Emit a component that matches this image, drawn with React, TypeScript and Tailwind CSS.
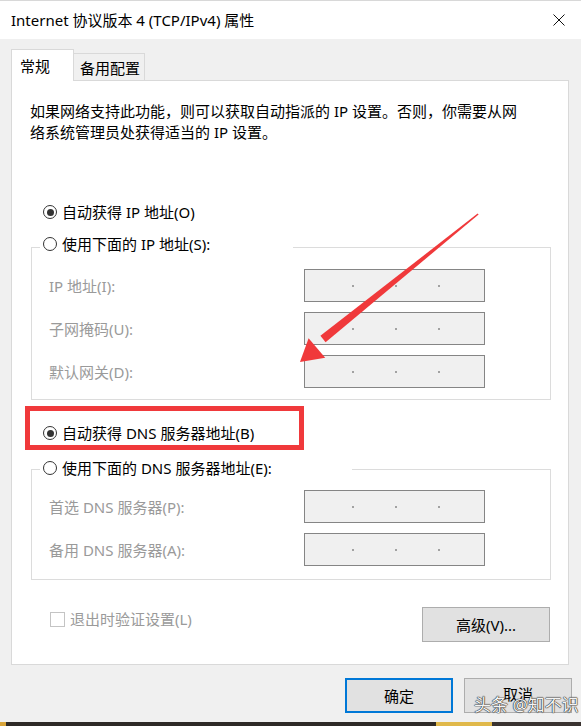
import React from "react";

function Radio({ checked }: { checked?: boolean }) {
  return (
    <span className="w-[14px] h-[14px] rounded-full border border-[#333] bg-white flex items-center justify-center shrink-0">
      {checked && <span className="w-[7px] h-[7px] rounded-full bg-[#333]" />}
    </span>
  );
}

function IpBox() {
  return (
    <div className="w-[181px] h-[33px] border border-[#858585] bg-[#f0f0f0] flex items-center pl-[47px] gap-[41px]">
      <span className="w-[2px] h-[2px] rounded-full bg-[#888]" />
      <span className="w-[2px] h-[2px] rounded-full bg-[#888]" />
      <span className="w-[2px] h-[2px] rounded-full bg-[#888]" />
    </div>
  );
}

function Row({ label }: { label: string }) {
  return (
    <div className="flex items-center h-[33px]">
      <span className="w-[272px] pl-[17px] text-[#9a9a9a] leading-[20px]">{label}</span>
      <IpBox />
    </div>
  );
}

export default function App() {
  return (
    <div className="relative w-[581px] h-[726px] overflow-hidden bg-[#f0f0f0] flex flex-col text-[15px] text-black font-['Noto_Sans','Noto_Sans_CJK_SC',sans-serif]">
      {/* Title bar */}
      <div className="h-[39px] shrink-0 bg-white border-t border-[#d8d8d8] flex items-center justify-between pl-[11px] pr-[16px]">
        <span className="leading-[20px]">Internet 协议版本 4 (TCP/IPv4) 属性</span>
        <svg width="12" height="12" viewBox="0 0 12 12">
          <path d="M0.5 0.5 L11.5 11.5 M11.5 0.5 L0.5 11.5" stroke="#111" strokeWidth="1" fill="none" />
        </svg>
      </div>

      {/* Tabs */}
      <div className="h-[42px] shrink-0 flex items-end pl-[11px]">
        <div className="relative z-10 h-[32px] w-[63px] bg-white border-l border-t border-r border-[#d9d9d9] pl-[8px] pt-[6px] leading-[20px]">
          常规
        </div>
        <div className="h-[28px] w-[71px] bg-[#f0f0f0] border-t border-r border-[#d9d9d9] pl-[6px] pt-[4px] leading-[20px]">
          备用配置
        </div>
      </div>

      {/* Panel */}
      <div className="relative -mt-px ml-[11px] w-[558px] h-[585px] shrink-0 bg-white border border-[#d9d9d9] flex flex-col">
        <p className="mt-[20px] pl-[18px] leading-[21px]">
          如果网络支持此功能，则可以获取自动指派的 IP 设置。否则，你需要从网
          <br />
          络系统管理员处获得适当的 IP 设置。
        </p>

        <div className="mt-[59px] ml-[31px] h-[20px] flex items-center gap-[5px]">
          <Radio checked />
          <span className="leading-[20px]">自动获得 IP 地址(O)</span>
        </div>

        {/* Group 1 */}
        <div className="mt-[12px] ml-[28px] w-[253px] h-[20px] relative z-10 -mb-[7px] bg-white flex items-center gap-[5px] pl-[3px]">
          <Radio />
          <span className="leading-[20px]">使用下面的 IP 地址(S):</span>
        </div>
        <div className="ml-[19px] w-[520px] border border-[#dcdcdc] pt-[21px] pb-[11px] flex flex-col gap-[10px]">
          <Row label="IP 地址(I):" />
          <Row label="子网掩码(U):" />
          <Row label="默认网关(D):" />
        </div>

        <div className="mt-[23px] ml-[31px] h-[20px] flex items-center gap-[5px]">
          <Radio checked />
          <span className="leading-[20px]">自动获得 DNS 服务器地址(B)</span>
        </div>

        {/* Group 2 */}
        <div className="mt-[15px] ml-[28px] w-[312px] h-[20px] relative z-10 -mb-[9px] bg-white flex items-center gap-[5px] pl-[3px]">
          <Radio />
          <span className="leading-[20px]">使用下面的 DNS 服务器地址(E):</span>
        </div>
        <div className="ml-[19px] w-[520px] border border-[#dcdcdc] pt-[20px] pb-[13px] flex flex-col gap-[10px]">
          <Row label="首选 DNS 服务器(P):" />
          <Row label="备用 DNS 服务器(A):" />
        </div>

        <div className="mt-[27px] ml-[38px] mr-[18px] flex items-start justify-between">
          <div className="mt-[2px] h-[20px] flex items-center gap-[5px]">
            <span className="w-[15px] h-[15px] border border-[#c4c4c4] bg-white" />
            <span className="text-[#9a9a9a] leading-[20px]">退出时验证设置(L)</span>
          </div>
          <div className="w-[128px] h-[35px] bg-[#e1e1e1] border border-[#adadad] flex items-center justify-center leading-[20px]">
            高级(V)...
          </div>
        </div>

        {/* Red highlight box */}
        <div className="absolute left-[13px] top-[325px] w-[279px] h-[44px] border-[5px] border-[#f0393b]" />
      </div>

      {/* Bottom buttons */}
      <div className="mt-[13px] flex justify-end gap-[11px] pr-[9px]">
        <div className="w-[108px] h-[35px] bg-[#e1e1e1] border-2 border-[#0078d7] flex items-center justify-center leading-[20px]">
          确定
        </div>
        <div className="w-[108px] h-[35px] bg-[#e1e1e1] border border-[#adadad] flex items-center justify-center leading-[20px] pb-[4px]">
          取消
        </div>
      </div>

      <div className="flex-1" />
      <div className="h-[4px] shrink-0 flex">
        <div className="w-[6px] bg-[#d9a53a]" />
        <div className="w-[430px] bg-[#2e2a27]" />
        <div className="w-[56px] bg-[#e0b84a]" />
        <div className="flex-1 bg-[#3a3330]" />
      </div>

      {/* Arrow annotation */}
      <svg className="absolute left-0 top-0 pointer-events-none" width="581" height="726" viewBox="0 0 581 726">
        <polygon points="477.6,213.6 478.6,214.6 325.6,342.2 320.4,335.8" fill="#f0393b" />
        <polygon points="300,362 308.6,338.3 316.9,348 325.2,357.8" fill="#f0393b" />
      </svg>

      {/* Watermark */}
      <div className="absolute left-[474px] top-[694px] text-[17px] leading-[22px] text-[#f4f4f4] [text-shadow:0_0_1px_#222,0_0_1px_#222,0_0_1px_#222]">
        头条 @知不识
      </div>
    </div>
  );
}
